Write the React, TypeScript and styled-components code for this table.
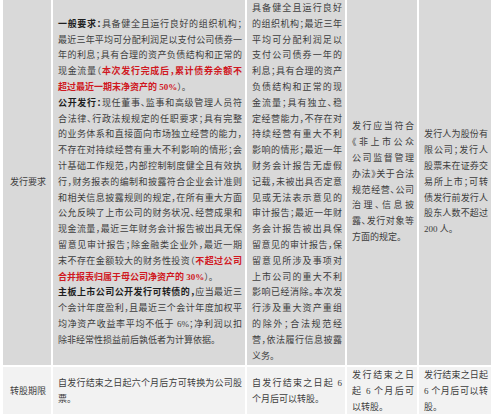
import React from 'react'
import styled, { createGlobalStyle } from 'styled-components'

const GlobalStyle = createGlobalStyle`
  body {
    margin: 0;
    background: #fff;
  }
`

const Table = styled.div`
  display: grid;
  grid-template-columns: 48px 192px 98px 70px 72px;
  gap: 2px;
  padding: 0 0 0 3px;
  font-family: "Liberation Serif", "Noto Sans CJK SC", serif;
  font-size: 9px;
  line-height: 15.8px;
  color: #3d3d3d;
  font-feature-settings: "halt";
`

const Cell = styled.div<{ $light?: boolean; $label?: boolean }>`
  display: flex;
  flex-direction: column;
  justify-content: center;
  align-items: ${p => (p.$label ? 'center' : 'stretch')};
  padding: 1px 3px 1px 5px;
  background: ${p => (p.$light ? '#f2f2f2' : '#d9d9d9')};
`

const TextLine = styled.span<{ $justify: boolean }>`
  display: block;
  white-space: nowrap;
  text-align: justify;
  text-align-last: ${p => (p.$justify ? 'justify' : 'left')};
`

const B = styled.b`
  font-weight: bold;
  color: #1e1e1e;
`

const R = styled.b`
  font-weight: bold;
  color: #d0181f;
`

type Para = React.ReactNode[]

const Text = ({ paras }: { paras: Para[] }) => (
  <>
    {paras.map((p, pi) =>
      p.map((line, i) => (
        <TextLine key={`${pi}-${i}`} $justify={i < p.length - 1}>
          {line}
        </TextLine>
      ))
    )}
  </>
)

const requirements: Para[] = [
  [
    <><B>一般要求：</B>具备健全且运行良好的组织机构；</>,
    '最近三年平均可分配利润足以支付公司债券一',
    '年的利息；具有合理的资产负债结构和正常的',
    <>现金流量（<R>本次发行完成后，累计债券余额不</R></>,
    <><R>超过最近一期末净资产的 50%</R>）。</>,
  ],
  [
    <><B>公开发行：</B>现任董事、监事和高级管理人员符</>,
    '合法律、行政法规规定的任职要求；具有完整',
    '的业务体系和直接面向市场独立经营的能力，',
    '不存在对持续经营有重大不利影响的情形；会',
    '计基础工作规范，内部控制制度健全且有效执',
    '行，财务报表的编制和披露符合企业会计准则',
    '和相关信息披露规则的规定，在所有重大方面',
    '公允反映了上市公司的财务状况、经营成果和',
    '现金流量，最近三年财务会计报告被出具无保',
    '留意见审计报告；除金融类企业外，最近一期',
    <>末不存在金额较大的财务性投资（<R>不超过公司</R></>,
    <><R>合并报表归属于母公司净资产的 30%</R>）。</>,
  ],
  [
    <><B>主板上市公司公开发行可转债的，</B>应当最近三</>,
    '个会计年度盈利，且最近三个会计年度加权平',
    '均净资产收益率平均不低于  6%；净利润以扣',
    '除非经常性损益前后孰低者为计算依据。',
  ],
]

const listed: Para[] = [
  [
    '具备健全且运行良好',
    '的组织机构；最近三年',
    '平均可分配利润足以',
    '支付公司债券一年的',
    '利息；具有合理的资产',
    '负债结构和正常的现',
    '金流量；具有独立、稳',
    '定经营能力，不存在对',
    '持续经营有重大不利',
    '影响的情形；最近一年',
    '财务会计报告无虚假',
    '记载，未被出具否定意',
    '见或无法表示意见的',
    '审计报告；最近一年财',
    '务会计报告被出具保',
    '留意见的审计报告，保',
    '留意见所涉及事项对',
    '上市公司的重大不利',
    '影响已经消除。本次发',
    '行涉及重大资产重组',
    '的除外；合法规范经',
    '营，依法履行信息披露',
    '义务。',
  ],
]

const nonListed: Para[] = [
  [
    '发行应当符合',
    '《非上市公众',
    '公司监督管理',
    '办法》关于合法',
    '规范经营、公司',
    '治理、信息披',
    '露、发行对象等',
    '方面的规定。',
  ],
]

const shareholders: Para[] = [
  [
    '发行人为股份有',
    '限公司；发行人',
    '股票未在证券交',
    '易所上市；可转',
    '债发行前发行人',
    '股东人数不超过',
    '200 人。',
  ],
]

const App = () => {
  return (
    <>
      <GlobalStyle />
      <Table>
        <Cell $label>发行要求</Cell>
        <Cell>
          <Text paras={requirements} />
        </Cell>
        <Cell>
          <Text paras={listed} />
        </Cell>
        <Cell>
          <Text paras={nonListed} />
        </Cell>
        <Cell>
          <Text paras={shareholders} />
        </Cell>

        <Cell $light $label>转股期限</Cell>
        <Cell $light>
          <Text paras={[['自发行结束之日起六个月后方可转换为公司股', '票。']]} />
        </Cell>
        <Cell $light>
          <Text paras={[['自发行结束之日起 6', '个月后可以转股。']]} />
        </Cell>
        <Cell $light>
          <Text paras={[['发行结束之日', '起 6 个月后可', '以转股。']]} />
        </Cell>
        <Cell $light>
          <Text paras={[['发行结束之日起', '6 个月后可以转', '股。']]} />
        </Cell>
      </Table>
    </>
  )
}

export default App
